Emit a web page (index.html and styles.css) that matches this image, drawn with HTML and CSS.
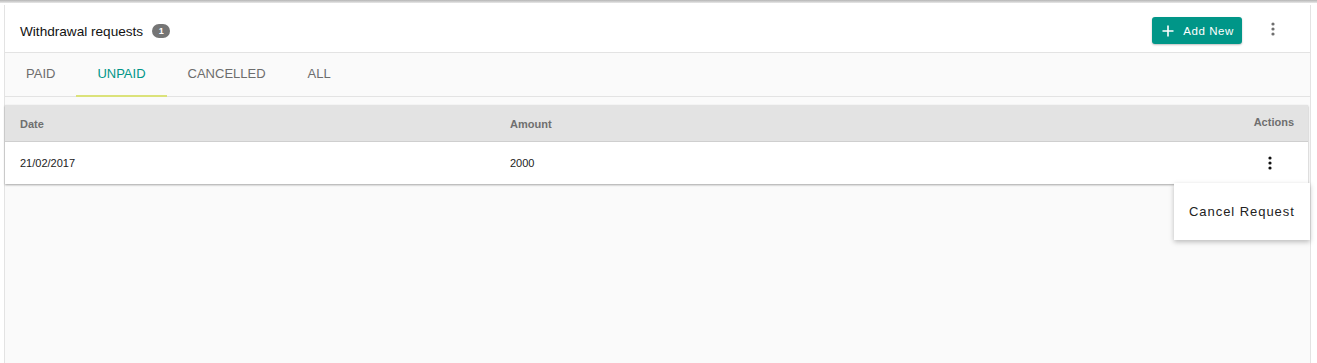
FILE: index.html
```html
<!DOCTYPE html>
<html lang="en">
<head>
<meta charset="UTF-8">
<meta name="viewport" content="width=device-width, initial-scale=1.0">
<title>Withdrawal requests</title>
<link rel="stylesheet" href="styles.css">
</head>
<body>
  <div class="topbar"></div>
  <div class="page">
    <div class="header">
      <div class="title">
        <span>Withdrawal requests</span>
        <span class="badge">1</span>
      </div>
      <div class="header-actions">
        <button type="button" class="add-button">
          <svg width="12" height="12" viewBox="0 0 12 12"><path d="M6 0.5v11M0.5 6h11" stroke="#fff" stroke-width="1.6" fill="none"/></svg>
          Add New
        </button>
        <span class="kebab kebab-gray">
          <svg width="4" height="14" viewBox="0 0 4 14"><circle cx="2" cy="2" r="1.6"/><circle cx="2" cy="7" r="1.6"/><circle cx="2" cy="12" r="1.6"/></svg>
        </span>
      </div>
    </div>
    <div class="tabs">
      <div class="tab">Paid</div>
      <div class="tab active">Unpaid</div>
      <div class="tab">Cancelled</div>
      <div class="tab">All</div>
    </div>
    <div class="table">
      <div class="row head">
        <span class="col-date">Date</span>
        <span class="col-amount">Amount</span>
        <span class="col-actions">Actions</span>
      </div>
      <div class="row">
        <span class="col-date">21/02/2017</span>
        <span class="col-amount">2000</span>
        <span class="col-actions">
          <span class="kebab">
            <svg width="4" height="14" viewBox="0 0 4 14"><circle cx="2" cy="2" r="1.6"/><circle cx="2" cy="7" r="1.6"/><circle cx="2" cy="12" r="1.6"/></svg>
          </span>
        </span>
      </div>
      <div class="menu">
        <div class="menu-item">Cancel Request</div>
      </div>
    </div>
  </div>
</body>
</html>
```

FILE: styles.css
```css
body {
  margin: 0;
  padding: 0;
  font-family: "Liberation Sans", Arial, sans-serif;
  background-color: #fff;
  color: #212121;
}

.topbar {
  height: 3px;
  background: linear-gradient(#b5b5b5, #e8e8e8);
}

.page {
  margin-left: 4px;
  width: 1305px;
  height: 360px;
  border-left: 1px solid #e3e3e3;
  border-right: 1px solid #e3e3e3;
  background-color: #fafafa;
  margin-top: 2px;
}

.header {
  height: 47px;
  background-color: #fff;
  border-bottom: 1px solid #e3e3e3;
  display: flex;
  align-items: center;
  justify-content: space-between;
  padding: 0 15px;
}

.title {
  display: flex;
  align-items: center;
  font-size: 13.6px;
  color: #111;
  margin-top: 5px;
}

.badge {
  margin-left: 9px;
  width: 18px;
  height: 14px;
  border-radius: 7px;
  background-color: #757575;
  color: #fff;
  font-size: 9px;
  font-weight: bold;
  display: flex;
  align-items: center;
  justify-content: center;
}

.header-actions {
  display: flex;
  align-items: center;
  margin-top: 4px;
}

.add-button {
  display: flex;
  align-items: center;
  gap: 9px;
  height: 27px;
  padding: 0 8px 0 10px;
  background-color: #009688;
  color: #fff;
  border: none;
  border-radius: 3px;
  font-family: "Liberation Sans", Arial, sans-serif;
  font-size: 11.5px;
  letter-spacing: 0.6px;
  box-shadow: 0 1px 2px rgba(0, 0, 0, 0.25);
}

.kebab {
  display: flex;
  align-items: center;
  fill: #111;
}

.kebab-gray {
  fill: #6f6f6f;
  margin-left: 29px;
  margin-right: 20px;
  margin-top: -4px;
}

.tabs {
  height: 43px;
  border-bottom: 1px solid #e3e3e3;
  display: flex;
}

.tab {
  padding: 0 21px;
  display: flex;
  align-items: center;
  font-size: 13px;
  text-transform: uppercase;
  color: #6d6d6d;
  border-bottom: 2px solid transparent;
  margin-bottom: -1px;
  padding-bottom: 1px;
}

.tab.active {
  color: #009688;
  border-bottom-color: #dbe27a;
}

.table {
  position: relative;
  margin-top: 8px;
  width: 1303px;
  background-color: #fff;
  box-shadow: 0 1px 2px rgba(0, 0, 0, 0.35);
}

.row {
  display: flex;
  align-items: center;
  height: 42px;
  padding: 0 14px 0 15px;
  font-size: 11px;
  color: #222;
}

.row.head {
  height: 37px;
  background-color: #e3e3e3;
  border-bottom: 1px solid #cfcfcf;
  font-weight: bold;
  color: #6f6f6f;
  padding-top: 2px;
  box-sizing: border-box;
}

.col-date {
  width: 490px;
}

.col-amount {
  flex: 1;
}

.col-actions {
  display: flex;
  justify-content: flex-end;
  margin-top: -1px;
}

.row .col-actions .kebab {
  margin-right: 22px;
}

.row.head .col-actions {
  margin-top: -5px;
}

.menu {
  position: absolute;
  top: 78px;
  right: -2px;
  width: 136px;
  height: 57px;
  background-color: #fff;
  box-shadow: 0 2px 5px rgba(0, 0, 0, 0.25);
  display: flex;
  align-items: center;
}

.menu-item {
  padding-left: 15px;
  font-size: 13px;
  letter-spacing: 0.95px;
  color: #222;
}
```
